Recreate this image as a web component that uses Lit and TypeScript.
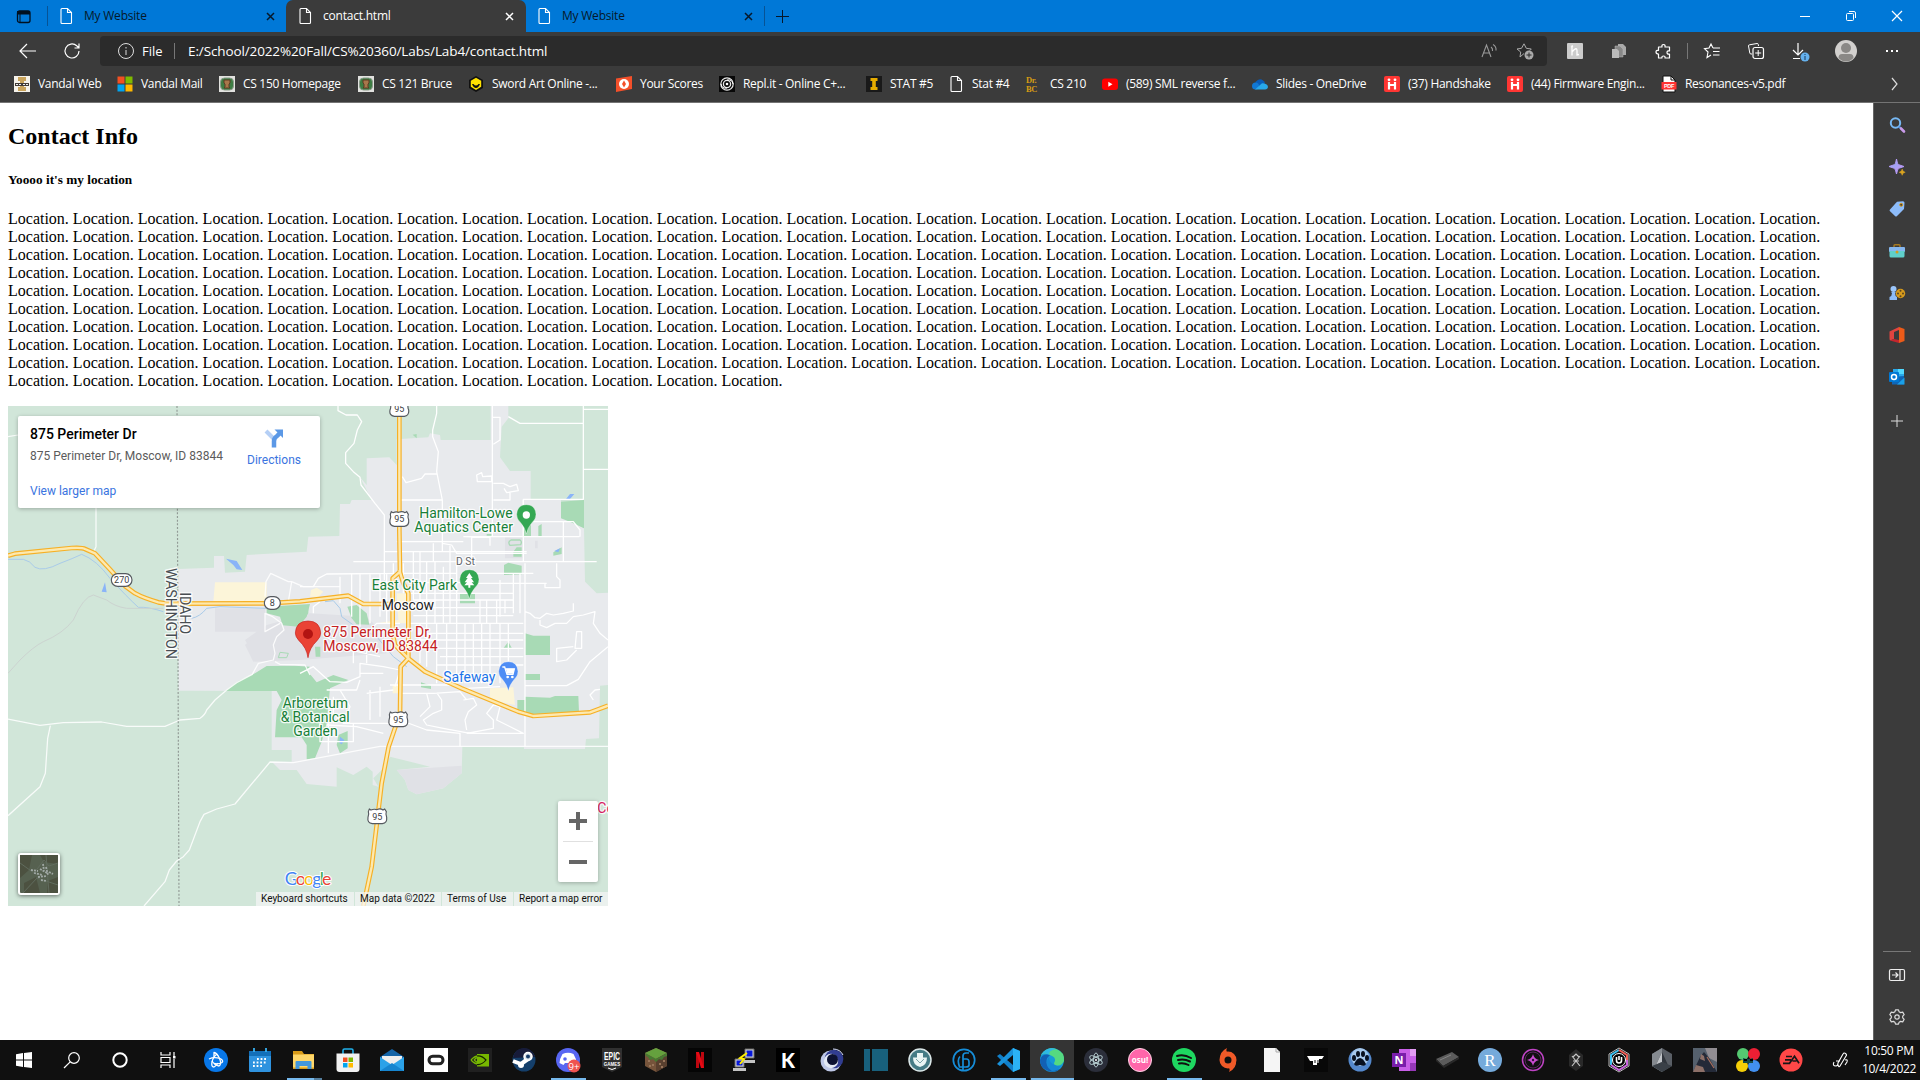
import { LitElement, html, svg, css } from "lit";
import { customElement } from "lit/decorators.js";

const icon = (body: unknown, size = 16, box = 16) =>
  html`<svg class="icon" width=${size} height=${size} viewBox="0 0 ${box} ${box}" fill="none">${body}</svg>`;

const filePath = svg`<path d="M3 1.500q0-1 1-1h5.500l4 4V14.500q0 1-1 1H4q-1 0-1-1zM9.500.500v4h4" stroke="#fff" stroke-width="1.100"/>`;
const handshake = svg`<rect width="16" height="16" rx="2" fill="#ff3633"/><path d="M5 6v7.500M11 6v7.500M5 9h6" stroke="#fff" stroke-width="2.200"/><circle cx="5" cy="3.800" r="1.400" fill="#fff"/><circle cx="11" cy="3.800" r="1.400" fill="#fff"/>`;
const csBadge = svg`<rect width="16" height="16" fill="#e2e2df"/><rect x="1.500" y="2" width="13" height="12" rx="4" fill="#3d7d43" stroke="#8b9a8a"/><path d="M5 4h6v3l-1 1v3l1 1H5l1-1V8L5 7z" fill="#a8774b" stroke="#5d3a23"/>`;

interface Bookmark { label: string; width: number; art: unknown; }
const bookmarks: Bookmark[] = [
  { label: "Vandal Web", width: 103, art: svg`<rect width="16" height="16" fill="#f5f2ea"/><path d="M4 1h8v4h-2v6h2v4H4v-4h2V5H4z" fill="#c9a45c"/><path d="M1 7h14v3H1z" fill="#423c36"/><path d="M2 8.500h2m1 0h2m2 0h2m1 0h2" stroke="#eee"/>` },
  { label: "Vandal Mail", width: 102, art: svg`<path fill="#f25022" d="M.500.500h7v7h-7z"/><path fill="#7fba00" d="M8.500.500h7v7h-7z"/><path fill="#00a4ef" d="M.500 8.500h7v7h-7z"/><path fill="#ffb900" d="M8.500 8.500h7v7h-7z"/>` },
  { label: "CS 150 Homepage", width: 139, art: csBadge },
  { label: "CS 121 Bruce", width: 110, art: csBadge },
  { label: "Sword Art Online -...", width: 148, art: svg`<path d="M8 0l7 4v8l-7 4-7-4V4z" fill="#111"/><path d="M8 1.800l5.200 3v5.900L8 14l-5.200-3.300V4.800z" fill="#ffe100"/><path d="M4 8h1.500q2.500 3 5 0H12q-1.500 4-4 4T4 8" fill="#111"/>` },
  { label: "Your Scores", width: 103, art: svg`<path d="M0 2.500L16 0v13L0 16z" fill="#f4502a"/><circle cx="8" cy="8" r="5" fill="#fff"/><path d="M8 4.500l2 3.500-2 3.500L6 8z" fill="#f4502a"/>` },
  { label: "Repl.it - Online C+...", width: 147, art: svg`<rect width="16" height="16" fill="#080808"/><g stroke="#e8e8e8"><circle cx="8" cy="8" r="6.200" stroke-width="1.200"/><circle cx="8" cy="8" r="3.600" stroke-width="1.300"/></g><circle cx="8" cy="8" r="1.300" fill="#fff"/><path d="M2 8q1 5 6 4M14 8q-1-5-6-4" stroke="#fff"/>` },
  { label: "STAT #5", width: 82, art: svg`<rect width="16" height="16" fill="#191919"/><path d="M4.500 2h7v3h-1.700v6h1.700v3h-7v-3h1.700V5H4.500z" fill="#e6ac00"/>` },
  { label: "Stat #4", width: 78, art: filePath },
  { label: "CS 210", width: 76, art: svg`<text x="0" y="7" class="serif-mark">Dr.</text><text x="0" y="16" class="serif-mark">BC</text>` },
  { label: "(589) SML reverse f...", width: 150, art: svg`<rect y="2.500" width="16" height="11.500" rx="3" fill="#f00"/><path d="M6.300 5.800v4.900l4.200-2.500z" fill="#fff"/>` },
  { label: "Slides - OneDrive", width: 132, art: svg`<path d="M3 8.500Q3.500 4.500 7 3.500t6 3.500L8 11H3z" fill="#0a5cb8"/><circle cx="3.500" cy="10" r="3.500" fill="#1178d4"/><path d="M3 13.500l7-6.200q5.500 0 6 3.500-.300 2.700-3 2.700z" fill="#28a8ea"/>` },
  { label: "(37) Handshake", width: 123, art: handshake },
  { label: "(44) Firmware Engin...", width: 154, art: handshake },
  { label: "Resonances-v5.pdf", width: 160, art: svg`<path d="M2 0h8l4 4v12H2z" fill="#fff" stroke="#111"/><path d="M10 0v4h4" stroke="#111"/><rect x=".500" y="6" width="15" height="7.500" fill="#f33"/><text x="8" y="12" text-anchor="middle" class="pdf-mark">PDF</text>` },
];

const sideIcons: unknown[] = [
  svg`<circle cx="6.500" cy="6" r="4.700" stroke="#77b9f5" stroke-width="2"/><path d="M10 9.500l2 2" stroke="#4f8fe0" stroke-width="2"/><path d="M12 11.500l3 3" stroke="#c99bea" stroke-width="2.600" stroke-linecap="round"/>`,
  svg`<defs><linearGradient id="spark" x2="1" y2="1"><stop stop-color="#79b5fa"/><stop offset="1" stop-color="#d98bee"/></linearGradient></defs><path d="M7.500 0q.800 5.500 2.200 5.700L15 7.500l-5.300 1.800Q8.500 10 7.500 15 6.500 10 5.300 9.300L0 7.500l5.300-1.800Q6.700 5.500 7.500 0" fill="url(#spark)" stroke="#b39cf5" stroke-width="1"/><path d="M13.200 10q.300 2.700 3 3.300-2.700.300-3 3-.300-2.700-3-3 2.700-.600 3-3.300" fill="#dba520" stroke="#dba520" stroke-width=".500"/>`,
  svg`<path d="M1 8.500L8 .800 14 .300q1.500 0 1.500 1.500L15 8l-7 7q-1 1-2 0L.800 10q-.600-.700.200-1.500" fill="#8dbcfa"/><circle cx="12.200" cy="3.800" r="1.500" fill="#4a4033" stroke="#d79b1d"/>`,
  svg`<path d="M5 5V2.800q0-1 1-1h4q1 0 1 1V5" stroke="#a67a22" stroke-width="1.500"/><rect x="0" y="4" width="16" height="5" rx="1" fill="#86b7f0"/><path d="M.500 8h15v5q0 1.500-1.500 1.500H2Q.500 14.500.500 13z" fill="#5fd0cb"/><circle cx="8" cy="9" r="1.500" fill="#d79b1d"/>`,
  svg`<circle cx="11.500" cy="8.500" r="4.700" fill="#d79b1d"/><g fill="#5b4520"><circle cx="11.500" cy="5.700" r="1"/><circle cx="11.500" cy="11.300" r="1"/><circle cx="14" cy="8.500" r="1"/><circle cx="9" cy="8.500" r="1"/></g><circle cx="4.500" cy="4" r="3" fill="#9bc6fb"/><path d="M2 7h5l-1 1q0 3 2 4v3H.500v-3q2.500-1 2.500-4z" fill="#8dbcfa"/>`,
  svg`<path d="M10 0l5.500 2v12L10 16z" fill="#ec5b19"/><path d="M10 0v3L5 5v7l-4 1.500Q.500 12.500.500 11V4.500z" fill="#e0443f"/><path d="M1 13.500L5 12l5 1v3z" fill="#c4262e"/>`,
  svg`<rect x="4" y="0" width="11" height="11" fill="#28a8ea"/><path d="M9 0h6v5H9z" fill="#50d9ff"/><path d="M3 8l12-1v8.500H3z" fill="#0f66b8"/><path d="M8 15.500l7.500-7v7z" fill="#1aa0e8"/><rect x="0" y="3" width="10" height="10" rx="1" fill="#0078d4"/><circle cx="5" cy="8" r="2.500" stroke="#fff" stroke-width="1.500"/>`,
];

interface Task { art: unknown; state?: string; }
const T = (art: unknown, state = ""): Task => ({ art, state });
const tasks: Task[] = [
  T(svg`<circle cx="12" cy="12" r="12" fill="#0877e8"/><g stroke="#fff" stroke-width="1.300" stroke-linejoin="round"><path d="M10 10V4.500q3 .500 5.500 6t-.500 7.500q-4-.500-7-5"/><path d="M5 11q5-2.500 11-.500 4 2 2 4-3 2-8 1"/><path d="M13 6q-4 3-5 8t2 5q2-1 4-4"/></g>`),
  T(svg`<rect x="1" y="3" width="22" height="21" rx="1.500" fill="#2f93df"/><path d="M1 3h22v5H1z" fill="#136fb8"/><path d="M6 0v4M18 0v4" stroke="#38b1f1" stroke-width="1.800"/><path d="M9 11h10M5 14.500h14M5 18h9" stroke="#fff" stroke-width="1.800" stroke-dasharray="1.800 1.800"/>`),
  T(svg`<path d="M1 3h9l2 3h10v15H1z" fill="#d99b18"/><path d="M1 6.500h21v13H1z" fill="#ffd769"/><path d="M3.500 21v-7q0-1 1-1h14q1 0 1 1v7h-4v-3h-8v3z" fill="#4297dc"/>`, "stacked"),
  T(svg`<path d="M7 6V2.500Q7 1 8.500 1h7Q17 1 17 2.500V6" stroke="#20b1ec" stroke-width="1.600"/><path d="M.500 5.500h23V21q0 3-3 3h-17q-3 0-3-3z" fill="#f1f1f1"/><path fill="#f25022" d="M7 9.500h4.500V14H7z"/><path fill="#7fba00" d="M12.500 9.500H17V14h-4.500z"/><path fill="#00a4ef" d="M7 15h4.500v4.500H7z"/><path fill="#ffb900" d="M12.500 15H17v4.500h-4.500z"/>`),
  T(svg`<path d="M0 9L12 1l12 8v14H0z" fill="#1464a7"/><path d="M2 8h20v10H2z" fill="#eee"/><path d="M0 9l12 8 12-8v14H0z" fill="#2ba2e8"/><path d="M0 23l12-8 12 8z" fill="#1685cf"/>`),
  T(svg`<rect width="24" height="24" fill="#fff"/><rect x="5" y="8.300" width="14" height="7.400" rx="3.700" stroke="#222" stroke-width="3"/>`),
  T(svg`<rect width="24" height="24" fill="#202020"/><path d="M9 6h12v12.500H9z" fill="#77b900"/><path d="M3 12q7-8 15 0-8 8-15 0M6 12q4-5 9 0-4 5-9 0" stroke="#77b900" stroke-width="1.300"/><path d="M9 8q5-.500 9 4-4 5-9 4.500" stroke="#182400" stroke-width="1.200"/><circle cx="10.500" cy="12" r="1.700" fill="#77b900"/>`),
  T(svg`<circle cx="12" cy="12" r="11.500" fill="#143f6b"/><path d="M1 10Q3 0 12 0q8 0 11 9z" fill="#171b39"/><path d="M1 13l8 3 5-4M9 16l7-5" stroke="#fff" stroke-width="4"/><circle cx="9" cy="17" r="3" fill="#fff"/><circle cx="16" cy="8.500" r="4" fill="#dce4ec" stroke="#fff" stroke-width="1.500"/><circle cx="16" cy="8.500" r="2" fill="#163b68"/>`),
  T(svg`<circle cx="12" cy="12" r="12" fill="#5866f2"/><path d="M6.500 6Q12 3.500 17.500 6q3 5 3 9l-4 2-1.500-2H9l-1.500 2-4-2q0-4 3-9" fill="#fff"/><circle cx="9" cy="11" r="1.800" fill="#5866f2"/><circle cx="18" cy="18" r="6.500" fill="#ef5350"/><text x="18" y="21.500" text-anchor="middle" class="badge-mark">9+</text>`, "running"),
  T(svg`<path d="M2 0h20v19l-10 5-10-5z" fill="#303030"/><text x="12" y="12" text-anchor="middle" class="epic-mark" textLength="16" lengthAdjust="spacingAndGlyphs">EPIC</text><text x="12" y="17.500" text-anchor="middle" class="epic-sub">GAMES</text><path d="M8 20l4 1.500 4-1.500" stroke="#fff"/>`),
  T(svg`<path d="M12 0l11 5v13l-11 6-11-6V5z" fill="#76543b"/><path d="M12 0l11 5-11 6L1 5z" fill="#65a13e"/><path d="M12 11l11-6v13l-11 6z" fill="#59402f"/><path d="M1 5l11 6 11-6v3l-3 1-2 3-3-1-3 3-3-3-3 1-2-3-2-1z" fill="#477a32"/><path d="M4 13h2m2 4h2m-5 1h2m8-2h2m2-3h2m-4 6h2" stroke="#98755a" stroke-width="1.800"/>`),
  T(svg`<rect width="24" height="24" fill="#050505"/><path d="M8 4h3v16H8zM13 4h3v16h-3z" fill="#bd0710"/><path d="M8 4h3l5 16h-3z" fill="#e50914"/>`),
  T(svg`<path d="M13 1h9v9h-9zM3 11h9v8H3z" fill="#d6d6d6" stroke="#666"/><path d="M14.500 2.500h6v6h-6zM4.500 12.500h6v5h-6z" fill="#0718d8"/><path d="M12 12h11v3H12zM1 20h13v3H1z" fill="#c4c4c4"/><path d="M15 5l-7 5 4 1-4 5" stroke="#ffef00" stroke-width="2"/>`),
  T(svg`<rect width="24" height="24" fill="#000"/><text x="12" y="19.500" text-anchor="middle" class="k-mark">K</text>`),
  T(svg`<circle cx="11" cy="13" r="10.500" fill="#bec8e7"/><circle cx="14" cy="11" r="9.300" fill="#313d91"/><circle cx="11" cy="13" r="7.200" fill="#e4eaf5"/><circle cx="12.500" cy="11.500" r="5.500" fill="#0c1232"/><path d="M13 1q7 0 10 6" stroke="#d9e1ff"/>`),
  T(svg`<path d="M0 1h6v22H0zM8 1h16v22H8z" fill="#18607c"/>`),
  T(svg`<circle cx="12" cy="12" r="11" fill="#457c86" stroke="#dce8e9" stroke-width="1.500"/><path d="M9 5h6v4.500h4q0 8-7 9.500-7-1.500-7-9.500h4z" fill="#e9f5f4"/><path d="M8 11l4 4 4-4" stroke="#7aa3a8"/>`),
  T(svg`<g stroke="#168dd8" stroke-width="1.700"><circle cx="12" cy="12" r="10.700"/><path d="M17 5h-3q-3 0-3 3v14M8 8.500q-3 3-.500 10.500H11M11 11h3.500q2.500 0 2.500 3v3q0 2-3 2h-3"/></g>`),
  T(svg`<path d="M17 0l7 3v18l-7 3L1 8l3-2 13 11z" fill="#1180ca"/><path d="M17 0l7 3v18l-7 3z" fill="#2bb2f5"/><path d="M1 16L17 0v7L4 18z" fill="#1993dc"/>`, "running"),
  T(svg`<circle cx="12" cy="12" r="12" fill="#159ad8"/><path d="M1 7Q7-2 16 1q9 3 8 12-3 6-9 4-2-1 0-4 1-4-5-6Q4 4 1 7" fill="#55d981"/><path d="M1 7Q7-2 16 1q-9 2-6 6Q4 4 1 7" fill="#2eb8e6"/><path d="M0 12q2-7 10-5-6 5-2 11 4 5 12 3-7 5-14 1-6-3-6-10" fill="#1260b4"/><path d="M15 17q-6-2-6-8-6 8 3 14 6 0 9-5-3 1-6-1" fill="#1687d5"/>`, "active"),
  T(svg`<circle cx="12" cy="12" r="12" fill="#2b2e3a"/><g stroke="#bad2d5" stroke-width=".900"><ellipse cx="12" cy="12" rx="2.600" ry="7"/><ellipse cx="12" cy="12" rx="2.600" ry="7" transform="rotate(60 12 12)"/><ellipse cx="12" cy="12" rx="2.600" ry="7" transform="rotate(120 12 12)"/></g><circle cx="12" cy="12" r="1" fill="#fff"/>`),
  T(svg`<circle cx="12" cy="12" r="11.500" fill="#ff66aa" stroke="#ffd5e6"/><text x="12" y="14.500" text-anchor="middle" class="osu-mark">osu!</text>`),
  T(svg`<circle cx="12" cy="12" r="12" fill="#1ed760"/><path d="M5 8q7-2 14 2M6 12q6-1.700 12 1.500M7 15.500q5-1 9.500 1.500" stroke="#101010" stroke-width="2" stroke-linecap="round"/>`, "running"),
  T(svg`<circle cx="12" cy="12" r="6" stroke="#f05a28" stroke-width="5"/><path d="M4 12Q3 4 11 0q-2 4 2 5M20 12q1 8-7 12 2-4-2-5" fill="#f05a28"/>`),
  T(svg`<path d="M4 0h12l4 4v20H4z" fill="#f5f5f5"/><path d="M16 0v4h4" stroke="#aaa"/>`),
  T(svg`<rect width="24" height="24" fill="#080808"/><path d="M3 8h17l-2 3h-3v4h-2v2H9v-4H6z" fill="#fff"/><path d="M11 12v3m3-3v3" stroke="#111"/>`),
  T(svg`<circle cx="12" cy="12" r="11.500" fill="#5488cc"/><circle cx="12" cy="9" r="9" fill="#a7c9ec"/><g fill="#07101f"><ellipse cx="6" cy="10" rx="2" ry="3"/><ellipse cx="10" cy="6" rx="2" ry="3"/><ellipse cx="15" cy="6" rx="2" ry="3"/><ellipse cx="19" cy="10" rx="2" ry="3"/><path d="M12 10q3 0 6 6-1 3-6 1-5 2-6-1 3-6 6-6"/></g>`),
  T(svg`<path d="M7 1h17v22H7z" fill="#c85fe8"/><path d="M18 1h6v7h-6z" fill="#e39cf4"/><path d="M18 15h6v8h-6z" fill="#9638b8"/><rect y="5" width="14" height="14" fill="#791eaa"/><text x="7" y="16" text-anchor="middle" class="onenote-mark">N</text>`),
  T(svg`<path d="M1 11L17 4l7 5-16 9z" fill="#5b5b5b"/><path d="M1 11l7 7 1 2-8-7zM8 18l16-9v2L9 20z" fill="#292929"/><path d="M5 12l11-5" stroke="#858585"/>`),
  T(svg`<circle cx="12" cy="12" r="12" fill="#75aadb"/><text x="12" y="18" text-anchor="middle" class="r-mark">R</text>`),
  T(svg`<g stroke="#be43c4" stroke-width="1.500"><circle cx="12" cy="12" r="10.500"/><circle cx="12" cy="12" r="8" stroke="#5d2562" stroke-width="1"/></g><path d="M12 6q1 5 6 6-5 1-6 6-1-5-6-6 5-1 6-6" fill="#cb4bd2"/><circle cx="12" cy="12" r="1.200" fill="#301338"/>`),
  T(svg`<path d="M12 1l7 6v11l-7 5-7-5V7z" fill="#292929"/><path d="M8 8l8 10M16 8L8 18M9 9l3-3 3 3M9 13h6" stroke="#c5c5c5" stroke-width="1.200"/>`),
  T(svg`<path d="M12 0l10 6v12l-10 6-10-6V6z" fill="#111" stroke="#bbb"/><path d="M4 17V7l8-5" stroke="#3dc1f2" stroke-width="2"/><path d="M12 2l8 5v5" stroke="#f25f56" stroke-width="2"/><path d="M20 12v5l-8 5-8-5" stroke="#ca66df" stroke-width="2"/><circle cx="12" cy="12" r="6.500" fill="#000" stroke="#fff"/><path d="M9.500 9v3.500q0 2.500 2.500 2.500t2.500-2.500V9M12 8v4" stroke="#fff" stroke-width="1.600"/>`),
  T(svg`<path d="M12 0l10 6v12l-10 6-10-6V6z" fill="#5a5f66"/><path d="M12 0v24L2 18V6z" fill="#858a90"/><path d="M12 4l6 13-6-3-6 3z" fill="#31363d"/><path d="M12 4v10l-6 3z" fill="#c1c4c8"/><path d="M2 18l10-4 10 4-10 6z" fill="#3a4047"/>`),
  T(svg`<rect width="24" height="24" fill="#55606d"/><path d="M12 0h12v14l-8-4z" fill="#918d92"/><path d="M0 24l7-15 4-5 5 6 8 14z" fill="#242a38"/><path d="M8 6l3 2 1 5-5-2zM3 17l7 2 2 5H0z" fill="#8d7068"/><path d="M14 9l7 11" stroke="#a8705e" stroke-width="1.200"/>`),
  T(svg`<g><circle cx="7" cy="6" r="6" fill="#55c971"/><circle cx="18" cy="6" r="6" fill="#ed1f34"/><circle cx="6" cy="18" r="6" fill="#f5cf08"/><circle cx="18" cy="18" r="6" fill="#4290f0"/></g><path d="M7 10q5 2 10 0v5H7z" fill="#164b47"/><path d="M8 12h3m3 0h3" stroke="#000" stroke-width="2"/>`),
  T(svg`<circle cx="12" cy="12" r="11.500" fill="#ff4747"/><path d="M7 8.500h6M6 11.800h6M4 15.300h6.500l5-7 4.500 7M13.500 13h4" stroke="#171717" stroke-width="1.700"/>`),
];

const shield = (x: number, y: number, n: string, us = true) => svg`
  <g transform="translate(${x} ${y})">
    ${us
      ? svg`<path d="M-24-23l5 3q9-4 17-1 11-5 19 1l5-3 5 8q-3 8 1 17 2 17-13 19H-15q-16-2-13-19 4-9 1-17z" fill="#fff" stroke="#55595f" stroke-width="3.500"/>`
      : svg`<rect x=${n.length > 1 ? -31 : -24} y="-19" width=${n.length > 1 ? 62 : 48} height="38" rx="19" fill="#fff" stroke="#55595f" stroke-width="3.500"/>`}
    <text y="9" text-anchor="middle" class="route">${n}</text>
  </g>`;

const pin = (x: number, y: number, c: string, glyph: unknown) => svg`
  <g transform="translate(${x} ${y})"><path d="M0 0Q-3-18-17-34-29-44-29-59-27-88 0-88T29-59Q29-44 17-34 3-18 0 0z" fill=${c} stroke="#fff" stroke-opacity=".5" stroke-width="2"/>${glyph}</g>`;

const mapArt = () => svg`
  <svg class="map-art" viewBox="24 18 1800 1500" width="600" height="500">
    <rect x="24" y="18" width="1800" height="1500" fill="#d1e6d9"/>
    <path fill="#e8eaed" d="M535 507L642 503V468H672L675 518 735 515 740 465 920 455 925 410 1018 408 1020 312 1050 312 1055 300H1115L1080 232 1100 255V175L1168 172 1190 195V118L1285 112 1290 100 1320 105 1322 120H1472V18H1525V55L1505 80 1500 172 1530 213H1592V298H1683V350L1752 385 1755 545 1790 580 1824 578V855L1800 857 1797 1015 1758 1017 1755 1047H1572V1042L1387 1040 1385 1120 1330 1165 1250 1183 1225 1170 1215 1140 1190 1110 1290 1100 1170 1070 1155 1100 1120 1135 1135 1160 1118 1155V1115L1100 1100 1060 1125 1010 1102V1160L920 1152 890 1110H840L815 1085H875V1050H815V873L570 872H535z"/>
    <g fill="#e0e1e6">
      <path d="M645 625H795V695L820 780V760L770 772V780L735 720 770 695H645z"/>
      <path d="M800 675L930 640 1100 650 1150 700 1160 760 900 780 760 785 735 735z"/>
      <path d="M1190 1110L1385 1097 1385 1120 1330 1165 1250 1183 1225 1170 1215 1140z"/>
      <path d="M1515 412H1568V475H1515zM1605 422H1613V445H1605z"/>
    </g>
    <g fill="#a8dab5">
      <path d="M800 620L930 612 920 650 895 680 848 676 840 650 800 640z"/>
      <path d="M900 615H925L925 640 905 665zM1042 620L1070 615 1100 640 1108 674 1070 673 1055 655z"/>
      <path d="M675 873L715 843 765 820 800 798 885 797 930 800 920 810 950 847 1000 825 1045 840 990 865 980 970 965 1025 945 1075 920 1078 920 1035 905 1012 825 1012 830 930 845 900 830 873z"/>
      <path d="M1683 305L1752 300V385L1720 370 1683 355zM1570 375H1593V410H1570zM1615 378L1625 372V408H1615zM1540 455L1550 442 1565 442V470H1540zM1512 495L1525 488 1565 497V523L1512 525zM1380 580H1425V610H1380zM1575 700L1600 707 1650 707V765H1575zM1660 457L1685 442V462L1660 467zM1510 745L1525 725 1537 747z"/>
      <path d="M1575 890L1650 893 1665 888H1735L1737 935 1670 940 1615 945 1552 935V900H1575zM1575 750H1650V763L1575 765zM1575 822H1620V840H1575zM1263 847L1293 857V867L1263 862zM1015 1005L1043 993V1045L1020 1060 1010 1035z"/>
      <path d="M1238 104L1250 102V115zM1460 402h15v5h-15zM945 740h16v30h-14z"/>
    </g>
    <path d="M1533 420H1560Q1567 424 1562 434L1530 436Q1522 426 1533 420z" fill="none" stroke="#a8dab5" stroke-width="4"/>
    <g fill="#fcf5d9"><path d="M645 547H800V605H640zM933 570L950 563 970 575 955 590 930 590zM1190 580H1230V670H1130L1195 660zM1178 855H1200V880H1178zM1470 865L1540 862 1545 915 1470 900z"/></g>
    <g fill="#8ab4f8"><path d="M678 476L710 483 727 510 710 508 700 495zM305 575L315 547 320 577zM1698 297L1710 282 1723 282 1710 297zM1663 453L1680 445 1675 457zM1020 1010L1033 1020 1025 1033 1018 1028z"/></g>
    <g fill="none" stroke="#a9cbe9" stroke-width="3"><path d="M24 478H70Q90 482 105 502 130 516 180 490 220 475 245 463 290 480 330 535 380 590 415 622 445 620 490 635M575 655Q600 650 620 625L660 620 800 625M975 605L1000 602 1020 625 1025 650 1060 675 1130 710 1180 770 1220 800"/></g>
    <path d="M60 780Q100 740 130 725 190 700 220 660 250 590 280 585L320 600Q345 620 380 625L490 625M24 820L60 780" fill="none" stroke="#ccd3d0" stroke-width="3"/>
    <g fill="none" stroke="#fff" stroke-width="3.800" stroke-linejoin="round">
      <path d="M24 110L54 105M288 324V440L282 452M24 957L120 976 190 968 305 966 380 979H495L540 960 600 955Q615 945 620 930L645 900 680 870 710 848 757 823 775 790 820 780 825 760 820 735 830 710 852 690 845 670 818 650 795 640V695L840 670M151 977L143 1015 136 1120 120 1160 24 1247M432 1518L495 1445 508 1410 530 1383 550 1370 568 1350 600 1265 612 1243 650 1227 705 1212 810 1086 880 1088 1140 1039H1824M795 590L798 545 812 520 865 545 875 545 865 605M875 545L910 560H1020M825 785L840 793 915 795 930 825" opacity=".85"/>
      <path d="M1014 18V32L1038 45H1072L1085 65 1072 90 1062 130 1037 158V190L1060 215 1080 232 1083 255 1125 310 1153 345V540M1310 18V40L1298 90V110L1315 155 1310 215 1327 300V350M1207 230L1218 248 1265 235 1275 222H1310M1202 300H1327M1478 52H1500V120L1480 133M1477 18V410M1525 50L1560 70H1750M1750 18V298H1570V410M1750 28H1824M1750 208H1824M1430 225L1445 218 1448 230 1475 228V245H1432zM1480 250H1510L1530 260 1550 253 1555 272 1520 278 1512 265M1530 278V300H1480"/>
      <path d="M1180 485H1790M1153 455H1580M1190 425H1390M1390 410H1738M1570 300V485M1690 365V485M1690 365H1720L1740 390V410M1590 365H1690M1327 350V455M1327 430L1355 435 1370 460H1580M1390 410L1470 412V437M1415 410V480M1350 437V485M1300 430V485M1060 485H1180M900 560H940L955 535 980 522 1195 520M1020 530V610M1055 522V650M1080 522V680M1110 522V670M1140 520V650M1160 520V670M1180 490V560M1210 490V580M1240 455V600M1260 455V610M1280 485V670M1305 485V670M1330 500V670M1350 485V670M1370 485V670M1440 600V670M1460 600V670M1490 600V670M1515 600V640M1540 520V640M1560 520V640M1190 520H1370M1230 548H1380M1230 580H1540M1240 600H1540M1240 623H1540M1240 647H1540M1220 670H1570M1425 550H1640M1425 520H1600M1500 540V650M940 640V620L960 605M970 705L1010 730 1050 750 1140 770M1110 690L1130 670H1200M1060 755V790M1100 730V790"/>
      <path d="M1575 490V1040M1670 490V530L1680 540V563H1635V550M1575 635L1590 640 1605 653 1620 655 1640 640 1660 645 1690 640 1720 633V610M1620 660V675L1640 683 1665 670 1700 670 1720 650 1750 645 1785 635 1780 670 1800 700 1824 720M1570 700H1250M1250 720H1570M1240 745H1570M1320 770H1570M1310 795H1570M1280 670V800M1310 670V850M1340 670V850M1370 670V850M1395 670V850M1420 670V850M1445 670V850M1470 670V840M1500 670V850M1525 670V850M1260 670V790M1730 695H1745V745H1725zM1720 740L1670 745V785L1700 780 1730 750M1575 857H1700L1735 838 1770 785 1824 740"/>
      <path d="M900 820L940 800 990 845 1040 847 1080 830 1080 790 1150 800 1200 810 1185 860M1080 820H1150M1170 855H1350L1400 865 1500 860M1200 880H1300L1380 875 1400 900M1310 878L1325 900V930L1300 940 1270 960 1280 975 1330 985 1410 1000M1280 880L1290 920 1260 950M1200 960L1240 975 1280 990 1380 1000V1040M1390 900L1420 895 1430 915 1405 935 1395 960 1400 990M1400 1000L1480 985V960L1460 940 1480 915 1500 920 1490 960 1570 1000 1400 1000M980 870H1070L1080 840M1000 890V970M1020 870L1050 920 1030 970H1190M980 975L1070 980 1150 1000M960 965V1025H1060V970M985 970V1060M1110 870V960M1140 860V950M1100 880L1180 870M1780 900L1770 885 1785 870 1800 868"/>
    </g>
    <path d="M840 757L865 760 860 773 835 773z" fill="none" stroke="#a8dab5" stroke-width="3"/>
    <path d="M531 18L537 1518" stroke="#929b96" stroke-width="3.500" stroke-dasharray="6 5"/>
    ${[["#f6b026", 14], ["#fde9af", 7]].map(([c, w]) => svg`<g fill="none" stroke=${c} stroke-width=${w} stroke-linejoin="round">
      <path d="M24 467L45 461 215 444Q247 442 255 447L285 460 330 508 375 558 405 580Q430 594 475 607L500 611 800 610 900 604 1045 587 1090 612H1185"/>
      <path d="M1198 18V390L1200 515 1178 535V700L1185 735 1225 775 1202 800 1200 940 1166 1040 1145 1150 1133 1250 1115 1400 1090 1518M1198 510L1210 550 1225 580V775L1275 815 1385 865 1555 935 1600 948 1770 937 1824 917"/>
    </g>`)}
    ${shield(1198, 28, "95")}${shield(1198, 358, "95")}${shield(1195, 959, "95")}${shield(1132, 1250, "95")}
    ${shield(365, 540, "270", false)}${shield(817, 609, "8", false)}
    <g class="map-label">
      <g fill="#188038"><text x="1258" y="354" textLength="280">Hamilton-Lowe</text><text x="1243" y="396" textLength="296">Aquatics Center</text><text x="1115" y="571" textLength="256">East City Park</text>
      <text x="848" y="924" textLength="196">Arboretum</text><text x="842" y="966" textLength="207">&amp; Botanical</text><text x="880" y="1008" textLength="133">Garden</text></g>
      <g fill="#c5221f"><text x="970" y="711" textLength="323">875 Perimeter Dr,</text><text x="970" y="753" textLength="343">Moscow, ID 83844</text></g>
      <text x="1330" y="846" fill="#1a73e8" textLength="156">Safeway</text>
      <text x="1145" y="630" fill="#202124" textLength="157">Moscow</text>
      <text x="1792" y="1240" fill="#d81b60">Co</text>
      <text x="1368" y="496" fill="#5f6368" class="street">D St</text>
      <text transform="translate(497 504) rotate(90)" fill="#484d52" class="state" textLength="273">WASHINGTON</text>
      <text transform="translate(539 577) rotate(90)" fill="#484d52" class="state" textLength="125">IDAHO</text>
    </g>
    ${pin(1579, 402, "#34a853", svg`<circle cy="-57" r="11" fill="#fff"/>`)}
    ${pin(1408, 597, "#34a853", svg`<path d="M0-78l10 15H5l9 13H7l8 9H3v7h-6v-7h-12l8-9h-7l9-13h-5z" fill="#fff"/>`)}
    ${pin(1525, 873, "#4e8df5", svg`<path d="M-18-72h7l7 22h18l4-16h-26" stroke="#fff" stroke-width="4" fill="none"/><path d="M-7-67h25l-4 15H-4z" fill="#fff"/><circle cx="-2" cy="-42" r="4" fill="#fff"/><circle cx="12" cy="-42" r="4" fill="#fff"/>`)}
    <path d="M924 773Q920 743 897 722 886 710 886 699 888 663 924 663T962 699Q962 711 951 722 928 744 924 773z" fill="#ea4335" stroke="#c5221f" stroke-width="2"/><circle cx="924" cy="702" r="15" fill="#b31412"/>
    <text x="854" y="1454" class="google" textLength="140"><tspan fill="#4285f4">G</tspan><tspan fill="#ea4335">o</tspan><tspan fill="#fbbc04">o</tspan><tspan fill="#4285f4">g</tspan><tspan fill="#34a853">l</tspan><tspan fill="#ea4335">e</tspan></text>
  </svg>`;

@customElement("location-map")
class LocationMap extends LitElement {
  static styles = css`
    :host { display: block; position: relative; width: 600px; height: 500px; overflow: hidden; font-family: Roboto, sans-serif; }
    .map-art { display: block; }
    .map-label { font-size: 42px; stroke: #fff; stroke-width: 8px; stroke-opacity: .85; paint-order: stroke; stroke-linejoin: round; }
    .street { font-size: 31px; }
    .state { font-size: 43px; }
    .route { font-size: 27px; fill: #3c4043; }
    .google { font-size: 53px; font-family: Lato, sans-serif; stroke: #fff; stroke-width: 6px; paint-order: stroke; }
    .card { position: absolute; left: 10px; top: 10px; width: 302px; height: 92px; box-sizing: border-box; padding: 10px 12px; background: #fff; border-radius: 2px; box-shadow: 0 1px 4px #0004; display: flex; justify-content: space-between; font-size: 12px; color: #5b5b5b; }
    .place { display: flex; flex-direction: column; }
    .title { font-size: 14px; font-weight: 500; line-height: 17px; color: #000; }
    .address { line-height: 14px; margin-top: 6px; letter-spacing: 0; }
    .link { color: #3a74e0; }
    .larger { line-height: 14px; margin-top: 21px; letter-spacing: 0; }
    .directions { display: flex; flex-direction: column; align-items: center; width: 68px; margin-right: 0; padding-top: 3px; gap: 5px; line-height: 14px; }
    .zoom { position: absolute; right: 10px; top: 395px; width: 40px; height: 81px; display: flex; flex-direction: column; align-items: center; background: #fff; border-radius: 2px; box-shadow: 0 1px 4px #0004; }
    .zoom-key { height: 40px; display: flex; align-items: center; }
    .rule { width: 30px; height: 1px; background: #e0e0e0; }
    .thumb { position: absolute; left: 10px; top: 447px; width: 38px; height: 38px; border: 2px solid #fff; border-radius: 3px; box-shadow: 0 1px 4px #0008; background: #566150; }
    .credits { position: absolute; right: 0; bottom: 0; height: 14px; display: flex; gap: 1px; font-size: 10px; line-height: 14px; color: #111; }
    .credit { background: #f5f5f5b8; box-sizing: border-box; padding-left: 5px; white-space: nowrap; }
  `;
  render() {
    return html`${mapArt()}
      <div class="card">
        <div class="place"><span class="title">875 Perimeter Dr</span><span class="address">875 Perimeter Dr, Moscow, ID 83844</span><span class="link larger">View larger map</span></div>
        <div class="directions link"><svg width="20" height="19" viewBox="0 0 20 19"><path d="M2 2l8 8" stroke="#b5cff5" stroke-width="4"/><path d="M10 18.500V12q0-3 3-5l3-3" fill="none" stroke="#5b98e6" stroke-width="4.500"/><path d="M10.500.500h8.500v8.500z" fill="#5b98e6"/></svg>Directions</div>
      </div>
      <div class="zoom"><span class="zoom-key"><svg width="18" height="18"><path d="M0 7h18v4H0zM7 0h4v18H7z" fill="#666"/></svg></span><span class="rule"></span><span class="zoom-key"><svg width="18" height="4"><path d="M0 0h18v4H0z" fill="#666"/></svg></span></div>
      <div class="thumb"><svg width="38" height="38" viewBox="0 0 38 38"><path d="M0 0h12l-3 15-9 8zM20 0h18v9l-14-2zM4 28l12-6 4 16H4zM28 26l10-4v16H27z" fill="#4c5140"/><path d="M0 8l14 10L24 5l5 6 9-3M3 38l14-15 21 7M26 0l3 38" stroke="#616c5e" fill="none"/><path d="M11 15l7 1M14 18l8 2M20 14l7 4M23 9l1 7M18 22l9-1M26 12l2 8M21 25l5 1M29 17l4 2" stroke="#a0a8a4" stroke-width="1.800" stroke-dasharray="2 1"/></svg></div>
      <div class="credits">${[["Keyboard shortcuts", 98], ["Map data ©2022", 86], ["Terms of Use", 71], ["Report a map error", 94]].map(([t, w]) => html`<span class="credit" style="width:${w}px">${t}</span>`)}</div>`;
  }
}

@customElement("app-root")
export class AppRoot extends LitElement {
  static styles = css`
    :host { display: flex; flex-direction: column; width: 1920px; height: 1080px; overflow: hidden; background: #3b3b3b; color: #fff; font: 12px/16px "Open Sans", "Noto Sans", sans-serif; }
    .icon { display: block; flex: none; overflow: visible; }
    .tabs { height: 32px; display: flex; background: #0078d7; color: #06182a; flex: none; }
    .workspace { width: 47px; box-sizing: border-box; padding: 9px 0 0 16px; }
    .split { width: 1px; height: 20px; margin-top: 6px; background: #075395; }
    .tab { display: flex; align-items: center; box-sizing: border-box; height: 32px; padding: 0 11px 0 10px; gap: 10px; width: 238px; letter-spacing: -.22px; }
    .tab .name { flex: 1; }
    .current { width: 240px; background: #3b3b3b; color: #fff; border-radius: 7px 7px 0 0; padding-left: 11px; padding-right: 12px; }
    .third { width: 238px; padding-left: 10px; padding-right: 11px; }
    .plus { padding: 10px 0 0 11px; }
    .window { display: flex; margin-left: auto; }
    .window-key { width: 46px; display: flex; align-items: center; justify-content: center; }
    .toolbar { height: 38px; display: flex; align-items: center; flex: none; }
    .nav { width: 44px; padding-left: 6px; display: flex; justify-content: center; box-sizing: content-box; }
    .nav + .nav { padding: 0; }
    .address { width: 1447px; height: 30px; margin-left: 6px; background: #2b2b2b; border-radius: 4px; box-sizing: border-box; padding: 0 14px 0 18px; display: flex; align-items: center; }
    .scheme { margin-left: 8px; width: 32px; font-size: 13px; }
    .bar { width: 1px; height: 16px; background: #777; }
    .url { margin-left: 13px; flex: 1; font-size: 13.500px; letter-spacing: -.12px; }
    .star { margin-left: 19px; }
    .tools { display: flex; align-items: center; margin-left: 6px; }
    .tool { display: flex; align-items: center; justify-content: center; width: 44px; }
    .tools .bar { margin: 0 2px; }
    .profile { width: 47px; }
    .dots { width: 46px; }
    .marks { height: 33px; padding-left: 14px; display: flex; align-items: center; border-bottom: 1px solid #747474; flex: none; box-sizing: border-box; padding-bottom: 5px; }
    .mark { display: flex; align-items: center; gap: 8px; white-space: nowrap; letter-spacing: -.3px; flex: none; }
    .more { margin-left: 66px; }
    .serif-mark { font: bold 8.500px "Liberation Serif", serif; fill: #d79d13; }
    .pdf-mark { font: bold 5.500px "Liberation Sans", sans-serif; fill: #fff; }
    .body { flex: 1; display: flex; min-height: 0; }
    .page { width: 1873px; box-sizing: border-box; padding: 1px 8px 0; background: #fff; color: #000; font: 16px/18px "Liberation Serif", serif; }
    .heading { margin: 19px 0 0; font-size: 24px; line-height: 27px; }
    .sub { margin: 22px 0 23px; font-size: 13.280px; line-height: 15px; }
    .copy { margin: 0 0 16px; }
    .side { width: 47px; box-sizing: border-box; border-left: 1px solid #666; display: flex; flex-direction: column; align-items: center; padding-top: 14px; padding-bottom: 15px; gap: 26px; }
    .side-add { margin-top: 2px; }
    .side-rule { width: 28px; height: 1px; background: #777; margin-top: auto; margin-bottom: -11px; }
    .taskbar { height: 40px; display: flex; flex: none; background: #101010; }
    .system { width: 48px; display: flex; align-items: center; justify-content: center; }
    .apps { display: flex; margin-left: 2px; }
    .task { width: 44px; height: 40px; display: flex; align-items: center; justify-content: center; box-sizing: border-box; }
    .task:nth-child(n+28) { width: 43px; }
    .running { background: linear-gradient(#76b9ed, #76b9ed) 50% 100% / 35px 2px no-repeat; }
    .stacked { background: linear-gradient(90deg, #76b9ed 27px, #557f9f 27px) 50% 100% / 35px 2px no-repeat; }
    .active { background: linear-gradient(#76b9ed, #76b9ed) 50% 100% / 43px 2px no-repeat, #343434; }
    .tray { margin-left: auto; display: flex; align-items: center; padding-right: 5px; gap: 14px; }
    .clock { width: 52px; display: flex; flex-direction: column; align-items: center; line-height: 18px; letter-spacing: -.3px; white-space: nowrap; }
    .badge-mark { font: 9.500px "Open Sans", sans-serif; fill: #fff; }
    .epic-mark { font: bold 11px "Liberation Sans", sans-serif; fill: #fff; }
    .epic-sub { font: bold 4.500px "Liberation Sans", sans-serif; fill: #fff; }
    .k-mark { font: 900 20px Lato, sans-serif; fill: #fff; }
    .osu-mark { font: bold 8px "Open Sans", sans-serif; fill: #fff; }
    .onenote-mark { font: bold 11px "Open Sans", sans-serif; fill: #fff; }
    .r-mark { font: 17px "Liberation Serif", serif; fill: #fff; }
  `;

  private tab(name: string, cls: string, color: string) {
    return html`<div class="tab ${cls}">${icon(filePath)}<span class="name">${name}</span>${icon(svg`<path d="M1 1l7 7M8 1l-7 7" stroke=${color} stroke-width="1.500"/>`, 9, 9)}</div>`;
  }

  render() {
    return html`
      <div class="tabs">
        <div class="workspace">${icon(svg`<rect x="1.500" y="2" width="12.500" height="11.500" rx="2" stroke="#001020" stroke-width="1.300"/><path d="M1 2h13v3.500H1z" fill="#001020"/><path d="M4 5v8" stroke="#001020"/>`)}</div>
        <span class="split"></span>
        ${this.tab("My Website", "", "#06182a")}
        ${this.tab("contact.html", "current", "#fff")}
        ${this.tab("My Website", "third", "#06182a")}
        <span class="split"></span>
        <div class="plus">${icon(svg`<path d="M6.500 0v13M0 6.500h13" stroke="#06182a"/>`, 13, 13)}</div>
        <div class="window">
          <span class="window-key">${icon(svg`<path d="M0 5.500h10" stroke="#fff"/>`, 10, 10)}</span>
          <span class="window-key">${icon(svg`<rect x=".500" y="2.500" width="7" height="7" rx="1" stroke="#fff"/><path d="M3 .500h5q1.500 0 1.500 1.500v5" stroke="#fff"/>`, 10, 10)}</span>
          <span class="window-key">${icon(svg`<path d="M0 0l10 10M10 0L0 10" stroke="#fff" stroke-width="1.200"/>`, 10, 10)}</span>
        </div>
      </div>
      <div class="toolbar">
        <div class="nav">${icon(svg`<path d="M16 8H0M7 1L0 8l7 7" stroke="#fff" stroke-width="1.200"/>`)}</div>
        <div class="nav">${icon(svg`<path d="M15 8a7 7 0 1 1-2.300-5.200L15 5M15 .500V5h-4.500" stroke="#fff" stroke-width="1.200"/>`)}</div>
        <div class="address">
          ${icon(svg`<circle cx="8" cy="8" r="7.500" stroke="#ddd"/><path d="M8 7v5M8 4v1.500" stroke="#ddd"/>`)}
          <span class="scheme">File</span><span class="bar"></span>
          <span class="url">E:/School/2022%20Fall/CS%20360/Labs/Lab4/contact.html</span>
          ${icon(svg`<path d="M0 14L4.500 2 9 14M1.500 10h6M9 4q2 1.500 1.500 4M11 1.500q3.500 2 3 6" stroke="#999" stroke-width="1.100"/>`)}
          <span class="star">${icon(svg`<path d="M7 10.500L3 14l.700-5L0 6l4.500-.700L7 .800l2.300 4.500 5 .700-1.500 1.500" stroke="#aaa"/><circle cx="12" cy="12" r="4.500" fill="#aaa"/><path d="M12 9.500v5M9.500 12h5" stroke="#2b2b2b"/>`)}</span>
        </div>
        <div class="tools">
          <span class="tool">${icon(svg`<rect width="16" height="16" rx="1" fill="#ccc"/><path d="M5 2.500v10M4 4l2-1M5 9q5-6 5-1v4l2-.500" stroke="#fff" stroke-width="1.300"/>`)}</span>
          <span class="tool">${icon(svg`<path d="M7 1h5l3 3v8H7z" fill="#aaa"/><path d="M4 3h5l3 3v8H4z" fill="#888" stroke="#bbb" stroke-width=".500"/><path d="M1 6h5l2 2v7H1z" fill="#bbb"/>`)}</span>
          <span class="tool">${icon(svg`<path d="M3 3h3.500q-.500-2.500 1.500-2.500T9.500 3H14v4q-2.500-.500-2.500 1.500T14 10v4H9.500q.500-2-1.500-2t-1.500 2H3v-4Q.500 10 .500 8T3 6.500z" transform="translate(.5 1)" stroke="#fff" stroke-width="1.200" stroke-linejoin="round"/>`)}</span>
          <span class="bar"></span>
          <span class="tool">${icon(svg`<path d="M9 5L7 1 5 5 .500 5.700 4 9l-1 5.500L7 12M9 5h7M9 8.500h6.500M9 12h6.500" stroke="#fff" stroke-width="1.100"/>`)}</span>
          <span class="tool">${icon(svg`<path d="M4 11H3q-1 0-1.200-1L.500 3Q.300 2 1.500 1.800L9 .500q1-.200 1.300 1L10.500 3" stroke="#fff"/><rect x="5" y="4.500" width="10.500" height="11" rx="2" stroke="#fff" stroke-width="1.200"/><path d="M10.200 7v6M7.200 10h6" stroke="#fff"/>`)}</span>
          <span class="tool">${icon(svg`<path d="M6 0v12M1 7l5 5 5-5M1 15.500h7" stroke="#fff" stroke-width="1.200"/><circle cx="13" cy="14" r="4.500" fill="#65b1ed"/><path d="M13 13v4m0-6v1" stroke="#16395c"/>`)}</span>
          <span class="tool profile">${icon(svg`<circle cx="11" cy="11" r="11" fill="#d2d0ce"/><circle cx="11" cy="8" r="5" fill="#8a8886"/><path d="M3.500 18q0-4 3.500-4h8q3.500 0 3.500 4-3.500 3.500-7.500 3.500T3.500 18" fill="#8a8886"/>`, 22, 22)}</span>
          <span class="tool dots">${icon(svg`<path d="M2 8h2m3 0h2m3 0h2" stroke="#fff" stroke-width="2"/>`)}</span>
        </div>
      </div>
      <div class="marks">
        ${bookmarks.map(b => html`<span class="mark" style="width:${b.width}px">${icon(b.art)}${b.label}</span>`)}
        <span class="more">${icon(svg`<path d="M5 2l5 6-5 6" stroke="#ddd" stroke-width="1.200"/>`)}</span>
      </div>
      <div class="body">
        <div class="page">
          <h2 class="heading">Contact Info</h2>
          <h5 class="sub">Yoooo it's my location</h5>
          <p class="copy">${"Location. ".repeat(264).trim()}</p>
          <location-map></location-map>
        </div>
        <div class="side">
          ${sideIcons.map(a => icon(a))}
          <span class="side-add">${icon(svg`<path d="M8 2v12M2 8h12" stroke="#ddd"/>`)}</span>
          <span class="side-rule"></span>
          ${icon(svg`<rect x=".500" y="2.500" width="15" height="11" rx="1.500" stroke="#eee" stroke-width="1.200"/><path d="M11 2.500v11M3 8h6M6.500 5.500L9 8l-2.500 2.500" stroke="#eee" stroke-width="1.200"/>`)}
          ${icon(svg`<path d="M6.500.800h3l.600 2 1.500.800 2.100-.500 1.500 2.600L13.700 7.200v1.600l1.500 1.500-1.500 2.600-2.100-.500-1.500.800-.600 2h-3l-.600-2-1.500-.800-2.100.500L.800 10.300l1.500-1.500V7.200L.800 5.700l1.500-2.600 2.100.500 1.500-.800z" stroke="#ddd" stroke-width="1.200" stroke-linejoin="round"/><circle cx="8" cy="8" r="2.200" stroke="#ddd" stroke-width="1.200"/>`)}
        </div>
      </div>
      <div class="taskbar">
        <span class="system">${icon(svg`<path d="M0 2.200L7 1v6.500H0zM8 1l8-1v7.500H8zM0 8.500h7V15l-7-1.200zM8 8.500h8V16l-8-1z" fill="#fff"/>`)}</span>
        <span class="system">${icon(svg`<circle cx="10" cy="6" r="5.300" stroke="#fff" stroke-width="1.200"/><path d="M6.200 9.800L0 16" stroke="#fff" stroke-width="1.200"/>`)}</span>
        <span class="system">${icon(svg`<circle cx="8" cy="8" r="6.700" stroke="#fff" stroke-width="2"/>`)}</span>
        <span class="system">${icon(svg`<path d="M1 0v3h9V0M1 16v-3h9v3M1 5.500h9v5H1zM14 0v4m0 3v9" stroke="#fff" stroke-width="1.200"/><path d="M13 4h2.500v2.500H13z" fill="#fff"/>`)}</span>
        <div class="apps">${tasks.map(t => html`<span class="task ${t.state}">${icon(t.art, 24, 24)}</span>`)}</div>
        <div class="tray">${icon(svg`<path d="M1 10q-2 4 2 4 2 0 2-3L10 2q1-2 3 0 1 1 0 2L7 14q-1 2-2-1M12 8q3-1 2 2l-2 3M3 9h4" stroke="#fff" stroke-width="1.100"/>`)}<span class="clock"><span>10:50 PM</span><span>10/4/2022</span></span></div>
      </div>`;
  }
}
